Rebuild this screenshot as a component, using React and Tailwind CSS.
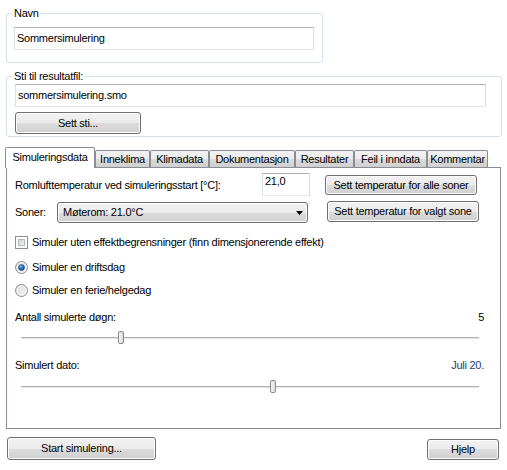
import React from 'react';

const btn =
  'border border-[#707070] rounded-[3px] bg-[linear-gradient(to_bottom,#f2f2f2_0%,#ebebeb_50%,#dddddd_50%,#cfcfcf_100%)] shadow-[inset_0_0_0_1px_#fcfcfc] flex items-center justify-center text-black';
const textbox = 'border border-[#dbdfe6] border-t-[#abadb3] border-b-[#e3e9ef] bg-white';

const tabs = [
  { label: 'Inneklima', w: 'w-[55px]' },
  { label: 'Klimadata', w: 'w-[59px]' },
  { label: 'Dokumentasjon', w: 'w-[86px]' },
  { label: 'Resultater', w: 'w-[59px]' },
  { label: 'Feil i inndata', w: 'w-[73px]' },
  { label: 'Kommentar', w: 'w-[61px]' },
];

function Radio({ checked, id }) {
  return (
    <svg width="13" height="13" viewBox="0 0 13 13" className="shrink-0">
      <defs>
        <linearGradient id={`rb-${id}`} x1="0" y1="0" x2="1" y2="1">
          <stop offset="0" stopColor="#d9d9d9" />
          <stop offset="1" stopColor="#f7f7f7" />
        </linearGradient>
        <radialGradient id={`rd-${id}`} cx="0.4" cy="0.35" r="0.7">
          <stop offset="0" stopColor="#8fc3f0" />
          <stop offset="0.5" stopColor="#2a6fc0" />
          <stop offset="1" stopColor="#123e80" />
        </radialGradient>
      </defs>
      <circle cx="6.5" cy="6.5" r="6" fill={`url(#rb-${id})`} stroke="#8e8f8f" />
      <circle cx="6.5" cy="6.5" r="4.5" fill="none" stroke="#f4f4f4" strokeWidth="0.8" />
      {checked && <circle cx="6.5" cy="6.5" r="3" fill={`url(#rd-${id})`} stroke="#1a4a8a" strokeWidth="0.6" />}
    </svg>
  );
}

function Slider({ pos }) {
  return (
    <div className="relative ml-[6px] w-[458px] h-[13px]">
      <div className="absolute left-0 right-0 top-[6px] h-[2px] bg-[#b3b3b3] border-b border-[#e6e6e6]" />
      <div
        className="absolute top-0 w-[6px] h-[13px] rounded-[2px] border border-[#8a8a8a] bg-[linear-gradient(to_right,#f4f4f4,#dcdcdc)]"
        style={{ left: pos }}
      />
    </div>
  );
}

export default function App() {
  return (
    <div className="w-[507px] h-[470px] bg-white text-black text-[11px] tracking-[-0.25px] font-['Liberation_Sans',Arial,sans-serif] flex flex-col overflow-hidden">
      {/* Navn */}
      <fieldset className="ml-[6px] mt-[6px] w-[317px] h-[57px] border border-[#d5dfe5] rounded-[3px] px-[7px]">
        <legend className="-ml-[2px] px-[2px] leading-[14px]">Navn</legend>
        <div className={`${textbox} mt-[7px] w-[300px] h-[23px] pl-[2px] leading-[21px]`}>Sommersimulering</div>
      </fieldset>

      {/* Sti til resultatfil */}
      <fieldset className="ml-[6px] mt-[6px] w-[496px] h-[68px] border border-[#d5dfe5] rounded-[3px] px-[8px]">
        <legend className="-ml-[3px] px-[2px] leading-[14px]">Sti til resultatfil:</legend>
        <div className={`${textbox} mt-[1px] w-[471px] h-[23px] pl-[2px] leading-[21px]`}>sommersimulering.smo</div>
        <button className={`${btn} mt-[5px] w-[126px] h-[22px]`}>Sett sti...</button>
      </fieldset>

      {/* Tabs */}
      <div className="flex items-end ml-[5px] mt-[10px] h-[20px]">
        <div className="relative z-10 -mb-px w-[90px] h-[21px] border border-b-0 border-[#898c95] rounded-t-[2px] bg-white flex justify-center pt-[3px] leading-[13px]">
          Simuleringsdata
        </div>
        {tabs.map((t) => (
          <div
            key={t.label}
            className={`${t.w} h-[17px] border border-b-0 border-[#898c95] rounded-t-[2px] bg-[linear-gradient(to_bottom,#f2f2f2_0%,#ebebeb_50%,#dddddd_50%,#cfcfcf_100%)] flex justify-center pt-[2px] leading-[13px]`}
          >
            {t.label}
          </div>
        ))}
      </div>

      {/* Panel */}
      <div className="ml-[6px] w-[495px] h-[262px] border border-[#898c95] bg-white pl-[8px] pr-[16px] flex flex-col">
        <div className="flex items-start h-[23px] mt-[5px]">
          <div className="w-[247px] h-[23px] flex items-center pt-[1px]">Romlufttemperatur ved simuleringsstart [°C]:</div>
          <div className={`${textbox} w-[48px] h-[23px] pl-[2px] leading-[15px]`}>21,0</div>
          <button className={`${btn} ml-[15px] mt-[2px] w-[152px] h-[20px]`}>Sett temperatur for alle soner</button>
        </div>

        <div className="flex items-start h-[22px] mt-[5px]">
          <div className="w-[42px] h-[22px] flex items-center">Soner:</div>
          <div className={`${btn} justify-start! mt-[1px] w-[251px] h-[21px] pl-[5px] pr-[4px]`}>
            <span className="flex-1">Møterom: 21.0°C</span>
            <svg width="7" height="4" viewBox="0 0 7 4">
              <path d="M0 0h7L3.5 4z" fill="#000" />
            </svg>
          </div>
          <button className={`${btn} ml-[19px] w-[152px] h-[21px]`}>Sett temperatur for valgt sone</button>
        </div>

        <div className="flex items-center h-[13px] mt-[13px]">
          <div className="w-[13px] h-[13px] border border-[#8e8f8f] bg-white p-[2px] shrink-0">
            <div className="w-full h-full border border-[#b4b7bb] bg-[linear-gradient(135deg,#cfd2d6,#f4f4f4)]" />
          </div>
          <span className="ml-[4px]">Simuler uten effektbegrensninger (finn dimensjonerende effekt)</span>
        </div>

        <div className="flex items-center h-[13px] mt-[12px]">
          <Radio checked id="a" />
          <span className="ml-[4px]">Simuler en driftsdag</span>
        </div>
        <div className="flex items-center h-[13px] mt-[10px]">
          <Radio id="b" />
          <span className="ml-[4px]">Simuler en ferie/helgedag</span>
        </div>

        <div className="flex justify-between leading-[13px] mt-[14px]">
          <span>Antall simulerte døgn:</span>
          <span>5</span>
        </div>
        <div className="mt-[7px]">
          <Slider pos={97} />
        </div>

        <div className="flex justify-between leading-[13px] mt-[15px]">
          <span>Simulert dato:</span>
          <span className="text-[#1f3a7a]">Juli 20.</span>
        </div>
        <div className="mt-[8px]">
          <Slider pos={249} />
        </div>
      </div>

      {/* Bottom buttons */}
      <div className="flex items-start mt-[8px] ml-[7px] mr-[8px]">
        <button className={`${btn} w-[149px] h-[23px]`}>Start simulering...</button>
        <button className={`${btn} ml-auto mt-[2px] w-[72px] h-[21px]`}>Hjelp</button>
      </div>
    </div>
  );
}
